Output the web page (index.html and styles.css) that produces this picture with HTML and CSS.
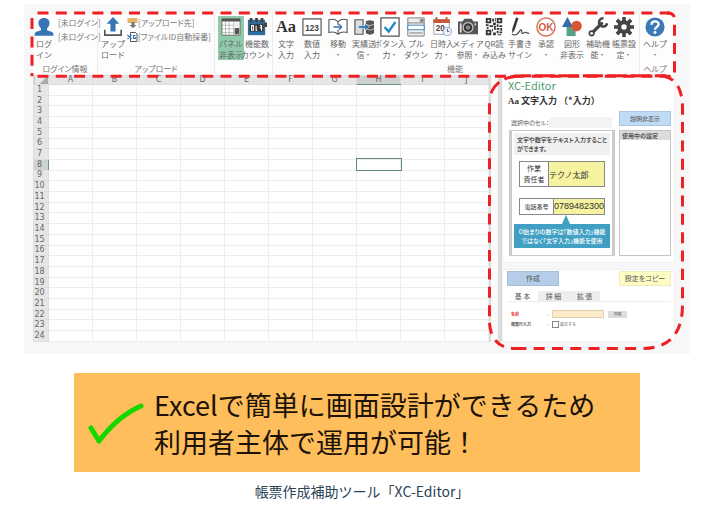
FILE: index.html
```html
<!DOCTYPE html>
<html lang="ja">
<head>
<meta charset="utf-8">
<title>XC-Editor</title>
<link rel="stylesheet" href="styles.css">
</head>
<body>
<figure class="feature">
<div class="shot">
  <div class="ribbon">
    <section class="group group-login">
      <div class="tools">
        <button class="tool"><svg class="icon" viewBox="0 0 22 22"><path fill="#3675b3" d="M11 1c4 0 6.500 2.500 6 6.500-.3 2.500-1.500 4-2.700 5.200v2L20 16.500q1.500.8 1.500 4H.5q0-3.200 1.500-4l5.700-1.800v-2C6.500 11.500 5.300 10 5 7.500 4.500 3.500 7 1 11 1z"/></svg><span>ログ<br>イン</span></button>
        <div class="notes"><span>[未ログイン]</span><span>[未ログイン]</span></div>
      </div>
      <h2 class="group-name">ログイン情報</h2>
    </section>
    <section class="group group-upload">
      <div class="tools">
        <button class="tool"><svg class="icon" viewBox="0 0 22 22"><path fill="#3675b3" d="M11 0l7 7.500h-4.200V16H8.200V7.500H4z"/><path fill="none" stroke="#555" stroke-width="1.800" d="M2 14v6h18v-6"/></svg><span>アップ<br>ロード</span></button>
        <div class="notes">
          <span><svg class="mini" viewBox="0 0 10 10"><path fill="#e8b765" d="M0 0h10v5H0z"/><path fill="#777" d="M4 4h3v3h2L5.500 10 2 7h2z"/></svg>[アップロード先]</span>
          <span><svg class="mini" viewBox="0 0 10 10"><path fill="#fff" stroke="#555" d="M3 .5h5L9.500 2v7.500H3z"/><path fill="none" stroke="#3675b3" stroke-width="1.200" d="M0 3l4 4M4 3L0 7M8 3.500H6v3h2V5"/></svg>[ファイルID自動採番]</span>
        </div>
      </div>
      <h2 class="group-name">アップロード</h2>
    </section>
    <section class="group group-panel">
      <div class="tools">
        <button class="tool tool-on"><svg class="icon" viewBox="0 0 22 22"><path fill="#fff" stroke="#666" d="M1 2h20v18H1z"/><path fill="#555" d="M1 2h20v3H1zM15 12h5v7h-5z"/><path stroke="#999" stroke-width=".7" fill="none" d="M1 9h13M1 13h13M1 17h13M5 5v15M9 5v15M14 5v15"/><path fill="#eee" d="M15 6h5v5h-5z"/></svg><span>パネル<br>非表示</span></button>
        <button class="tool"><svg class="icon" viewBox="0 0 22 22"><path fill="#2f6f9f" d="M1 3h19v17H1z"/><path fill="#444" d="M3 1h3v5H3zM9 1h3v5H9zM15 1h3v5h-3zM19 6h3v5h-3z"/><path fill="#333" d="M3 8h15v8H3z"/><path stroke="#fff" stroke-width="1.200" fill="none" d="M5 9.500h2v5H5zM10 9.500v5h1.500M14 9.500h2V12h-2M16 12v3"/></svg><span>機能数<br>カウント</span></button>
      </div>
    </section>
    <section class="group group-main">
      <div class="tools">
        <button class="tool"><svg class="icon" viewBox="0 0 22 22"><text class="aa" x="11" y="17" text-anchor="middle">Aa</text></svg><span>文字<br>入力</span></button>
        <button class="tool"><svg class="icon" viewBox="0 0 22 22"><path fill="#fff" stroke="#555" stroke-width="1.300" d="M1 2h20v18H1z"/><text class="digits" x="11" y="15" text-anchor="middle">123</text></svg><span>数値<br>入力</span></button>
        <button class="tool"><svg class="icon" viewBox="0 0 22 22"><path fill="#fff" stroke="#555" stroke-width="1.200" d="M11 5Q7 1.500 1 3v14q6-1.500 10 2 4-3.500 10-2V3q-6-1.500-10 2zM11 5v4M11 14v5"/><path fill="none" stroke="#3675b3" stroke-width="1.400" d="M6 11h9M12 8l3 3-3 3"/></svg><span>移動<br><i class="caret"></i></span></button>
        <button class="tool"><svg class="icon" viewBox="0 0 22 22"><path fill="#ddd" stroke="#555" stroke-width="1.300" d="M1 3h9v16H1z"/><path fill="#555" d="M13 5q4.500-3 9 0v13q-4.500 3-9 0z"/><path stroke="#ddd" stroke-width=".8" fill="none" d="M13 8q4.500 3 9 0M13 13q4.500 3 9 0"/><path fill="#3675b3" stroke="#fff" stroke-width=".5" d="M5 9.500h7V7l5 4-5 4v-2.500H5z"/></svg><span>実績送<br>信<i class="caret"></i></span></button>
        <button class="tool"><svg class="icon" viewBox="0 0 22 22"><path fill="#fff" stroke="#555" stroke-width="1.400" d="M1 1h20v20H1z"/><path fill="none" stroke="#268ac8" stroke-width="2.600" d="M5 11l4.500 5L17 5.500"/></svg><span>ボタン入<br>力<i class="caret"></i></span></button>
        <button class="tool"><svg class="icon" viewBox="0 0 22 22"><path fill="#eee" stroke="#777" d="M2 1h18v20H2z"/><path fill="#aaa" d="M15 2h5v4h-5z"/><path stroke="#777" d="M2 6.500h18M4 17.500h14"/><path fill="#fff" stroke="#3b7fb6" d="M2 9h18v5H2z"/><path fill="#555" d="M16 3l3 0-1.500 2z"/></svg><span>プル<br>ダウン</span></button>
        <button class="tool"><svg class="icon" viewBox="0 0 22 22"><path fill="#fff" stroke="#999" d="M2 3h17v16H2z"/><path fill="#c75836" d="M1.500 2.500h18v4h-18zM4 0h2v4H4zM15 0h2v4h-2z"/><text class="digits" x="9" y="15" text-anchor="middle">20</text><circle cx="17" cy="16" r="4.500" fill="#eef4fb" stroke="#86a7cd"/><path fill="none" stroke="#557" d="M17 13v3h2"/></svg><span>日時入<br>力<i class="caret"></i></span></button>
        <button class="tool"><svg class="icon" viewBox="0 0 22 22"><path fill="#555" d="M0 5h5l2-3h8l2 3h5v14H0z"/><circle cx="11" cy="11.500" r="6" fill="#ccc"/><circle cx="11" cy="11.500" r="4.700" fill="#333"/><circle cx="11" cy="11.500" r="2.500" fill="#888"/><path fill="#ddd" d="M2 7h2v10H2zM18 7h2v2h-2z"/></svg><span>メディア<br>参照<i class="caret"></i></span></button>
        <button class="tool"><svg class="icon" viewBox="0 0 22 22"><path fill="#333" d="M2 1h6v6H2zM14 1h6v6h-6zM2 14h6v6H2zM9 2h2v3H9zM12 1h1v4h-1zM10 6h3v3h-3zM2 8h3v2H2zM6 9h4v2H6zM3 11h2v2H3zM14 8h2v3h-2zM17 9h3v2h-3zM11 10h2v4h-2zM14 12h3v2h-3zM18 12h2v3h-2zM9 13h1v3H9zM10 17h3v3h-3zM14 15h2v3h-2zM17 16h3v2h-3zM15 19h4v1h-4z"/><path fill="#fff" d="M4 3h2v2H4zM16 3h2v2h-2zM4 16h2v2H4z"/></svg><span>QR読<br>み込み</span></button>
        <button class="tool"><svg class="icon" viewBox="0 0 22 22"><path stroke="#333" stroke-width="2.800" d="M8 1L4 13"/><path fill="#333" d="M2.500 12.500l3 1.200L2.500 18z"/><path fill="none" stroke="#444" stroke-width="1.300" d="M2 19c5 2 7-1 9-4 2-2 2 0 2 2s2 1 3 0 2 1 5 1"/></svg><span>手書き<br>サイン</span></button>
        <button class="tool"><svg class="icon" viewBox="0 0 22 22"><circle cx="11" cy="11" r="10" fill="#fff" stroke="#d9735a" stroke-width="1.600"/><text class="ok" x="11" y="15" text-anchor="middle">OK</text></svg><span>承認<br><i class="caret"></i></span></button>
        <button class="tool"><svg class="icon" viewBox="0 0 22 22"><path fill="#58a183" d="M5 10h10v11H5z"/><path fill="#3568ad" d="M6 0l6 11H0z"/><circle cx="16" cy="10" r="5.800" fill="#d95430"/></svg><span>図形<br>非表示</span></button>
        <button class="tool"><svg class="icon" viewBox="0 0 22 22"><path fill="none" stroke="#444" stroke-width="3.600" stroke-linecap="round" d="M4 18L15 7"/><path fill="none" stroke="#444" stroke-width="2.800" d="M17 1.500a4.500 4.500 0 1 0 4 5.500"/><circle cx="4" cy="18" r="3.400" fill="#444"/><circle cx="4" cy="18" r="1.500" fill="#fff"/></svg><span>補助機<br>能<i class="caret"></i></span></button>
        <button class="tool"><svg class="icon" viewBox="0 0 22 22"><path stroke="#444" stroke-width="4" d="M11 0v22M0 11h22M3.200 3.200l15.600 15.600M18.800 3.200L3.200 18.800"/><circle cx="11" cy="11" r="7.500" fill="#444"/><circle cx="11" cy="11" r="3" fill="#fff"/></svg><span>帳票設<br>定<i class="caret"></i></span></button>
      </div>
      <h2 class="group-name">機能</h2>
    </section>
    <section class="group group-help">
      <div class="tools">
        <button class="tool"><svg class="icon" viewBox="0 0 22 22"><circle cx="11" cy="11" r="10.500" fill="#3a78b8"/><path fill="none" stroke="#fff" stroke-width="2.600" d="M7.200 8.500C7.200 3.500 15 3.800 15 8c0 2.800-4 3-4 6"/><circle cx="11" cy="17" r="1.600" fill="#fff"/></svg><span>ヘルプ<br><i class="caret"></i></span></button>
      </div>
      <h2 class="group-name">ヘルプ</h2>
    </section>
  </div>

  <div class="workspace">
    <table class="sheet">
      <thead><tr id="letters"><th class="corner"></th></tr></thead>
      <tbody id="cells"></tbody>
    </table>
    <div class="gutter"></div>
    <aside class="panel">
      <section class="card">
        <h1 class="brand">XC-Editor</h1>
        <h2 class="mode"><b>Aa</b> 文字入力 （*入力）</h2>
        <div class="row">
          <label class="cell-label" for="cell">選択中のセル：</label>
          <input class="cell-input" id="cell" type="text">
          <button class="btn btn-blue">説明非表示</button>
        </div>
        <div class="boxes">
          <div class="help">
            <p class="help-text">文字や数字をテキスト入力すること<br>ができます。</p>
            <dl class="sample"><dt>作業<br>責任者</dt><dd>テクノ太郎</dd></dl>
            <dl class="sample sample-phone"><dt>電話番号</dt><dd>0789482300</dd></dl>
            <p class="callout">０始まりの数字は「数値入力」機能<br>ではなく「文字入力」機能を使用</p>
          </div>
          <div class="used"><h3>使用中の設定</h3></div>
        </div>
      </section>
      <section class="card card-form">
        <div class="row actions">
          <button class="btn btn-create">作成</button>
          <button class="btn btn-copy">設定をコピー</button>
        </div>
        <div class="tabs"><button class="tab tab-on">基 本</button><button class="tab">詳 細</button><button class="tab">拡 張</button></div>
        <div class="fields">
          <label class="required" for="name">名前</label><span>:</span>
          <div class="field"><input class="name" id="name" type="text"><button class="browse">参照</button></div>
          <span class="strong">複数行入力</span><span>:</span>
          <div class="field"><input class="check" id="multi" type="checkbox"><label for="multi">設定する</label></div>
        </div>
      </section>
    </aside>
  </div>

  <svg class="outline" viewBox="0 0 666 349" preserveAspectRatio="none">
    <path d="M13.500 9H646"/>
    <path d="M643 9Q650.500 9 650.500 15V72" stroke-dashoffset="2"/>
    <path d="M8 14V72"/>
    <path d="M13.500 72H651"/>
    <path d="M465.500 99V318"/>
    <path d="M467 89Q473 74 492 72" stroke-dasharray="14 6"/>
    <path d="M487 73Q490 71.500 500 71.500H642" stroke-dasharray="20 4"/>
    <path d="M640 72Q658.500 76 658.500 104V300Q658.500 343.500 618 343.500H490" stroke-dashoffset="1"/>
    <path d="M465.500 318Q467 343.500 492 343.500" />
  </svg>
</div>

<div class="banner">
  <svg class="tick" viewBox="0 0 56 42"><path d="M3 26l8 13Q30 14 53 4"/></svg>
  <p>Excelで簡単に画面設計ができるため<br>利用者主体で運用が可能！</p>
</div>
<figcaption>帳票作成補助ツール「XC-Editor」</figcaption>
</figure>
<script src="sheet.js"></script>
</body>
</html>
```

FILE: styles.css
```css
* { box-sizing: border-box; }
body, p, h1, h2, h3, dl, dd, figure { margin: 0; }
body {
  background: #fff;
  color: #555;
  font-family: "Noto Sans CJK JP", sans-serif;
}
button, input { font-family: inherit; color: inherit; margin: 0; padding: 0; border: 0; }
button { background: none; white-space: nowrap; }
.feature { padding: 4px 30px 0 24px; }

.shot {
  position: relative;
  background: #f7f7f7;
  padding: 10px 15px 12px 9px;
}
.outline {
  position: absolute;
  inset: 0;
  width: 100%;
  height: 100%;
  fill: none;
  stroke: #ee2024;
  stroke-width: 3;
  stroke-dasharray: 11 7.300;
  pointer-events: none;
}

/* Ribbon */
.ribbon { display: flex; height: 61px; padding-right: 5px; background: #fdfdfd; font-feature-settings: "palt"; }
.group {
  display: flex;
  flex-direction: column;
  justify-content: space-between;
  min-width: 0;
  padding-top: 2px;
  border-right: 1px solid #ececec;
}
.group-login { flex: 64 1 0; }
.group-upload { flex: 116 1 0; }
.group-panel { flex: 52 1 0; padding: 2px 2px 0 3px; }
.group-main { flex: 364 1 0; padding-right: 2px; }
.group-help { flex: 30 1 0; border-right: 0; }
.group-name {
  font-size: 8px;
  font-weight: 400;
  line-height: 12px;
  text-align: center;
  color: #777;
}
.tools { display: flex; }
.tool {
  display: flex;
  flex-direction: column;
  align-items: center;
  flex: 1 1 0;
  min-width: 0;
  font-size: 8px;
  line-height: 11px;
  color: #666;
}
.tool > span { min-height: 22px; }
.group-login .tool, .group-upload .tool { flex: 0 0 22px; }
.group-upload .tool { margin-left: 4px; }
.tool-on { background: #8fcbab; }
.icon { flex: none; width: 20px; height: 20px; margin: 1px; }
.caret {
  display: inline-block;
  width: 3px;
  height: 2px;
  margin: 0 2px 2px;
  background: #999;
  clip-path: polygon(0 0, 100% 0, 50% 100%);
}
.notes {
  display: flex;
  flex-direction: column;
  padding-left: 3px;
  font-size: 8px;
  line-height: 14px;
  white-space: nowrap;
  color: #777;
}
.notes span { display: flex; align-items: center; }
.mini { width: 11px; height: 10px; }
.aa { font: bold 18px "Liberation Serif", serif; fill: #333; }
.digits { font: bold 9px "Liberation Sans", sans-serif; fill: #444; }
.ok { font: bold 11px "Liberation Sans", sans-serif; fill: #d06048; }

/* Spreadsheet */
.workspace { display: grid; grid-template-columns: minmax(0, 456fr) minmax(0, 13fr) minmax(0, 173fr); }
.sheet {
  width: 100%;
  height: 267px;
  table-layout: fixed;
  border-collapse: collapse;
  background: #fff;
  font-family: "DejaVu Sans", sans-serif;
  font-size: 8px;
  line-height: 8px;
  color: #666;
}
.sheet th, .sheet td { padding: 0; border: 1px solid #ededed; }
.sheet th { background: #e6e6e6; border-color: #dedede; font-weight: 400; }
.sheet .corner {
  width: 15px;
  background: linear-gradient(135deg, #e6e6e6 55%, #aaa 55%);
}
.sheet tbody th { padding-right: 3px; }
.sheet th.active { background: #cdd3d0; }
.sheet thead th.active { border-bottom: 1px solid #73917f; }
.sheet tbody th.active { border-right: 1px solid #73917f; }
.sheet td.active { outline: 1px solid #5c8a74; }
.gutter { background: #fafafa; border: solid #dcdcdc; border-width: 0 4px 0 2px; }

/* Editor panel */
.panel { display: flex; flex-direction: column; gap: 6px; padding-top: 2px; font-size: 6px; line-height: 9px; }
.card { background: #fff; border: 1px solid #f1f1f1; padding: 0 3px 6px 5px; }
.brand { font-size: 11px; font-weight: 400; line-height: 15px; color: #4f9b70; }
.mode { font-size: 9px; line-height: 16px; color: #333; }
.mode b { font-family: "Liberation Serif", serif; }
.row { display: flex; align-items: flex-end; }
.cell-label { width: 41px; padding: 0 0 1px 3px; white-space: nowrap; font-feature-settings: "palt"; }
.cell-input { flex: 1 1 0; min-width: 0; height: 11px; background: #f3f3f3; }
.btn { width: 52px; height: 15px; font-size: 7px; line-height: 9px; }
.btn-blue { margin-left: 7px; background: #c0dcf4; border: 1px solid #a9c9e6; }
.row .btn-blue { margin: 2px 0 2px 7px; font-size: 6px; }
.boxes { display: flex; gap: 4px; padding: 2px 0 0 1px; }
.help { flex: 1 1 0; min-width: 0; height: 126px; border: 1px solid #ccc; border-width: 1px 3px; padding: 2px; }
.help-text {
  margin-bottom: 6px;
  padding: 2px 3px;
  background: #f0f0f0;
  font-weight: 700;
  white-space: nowrap;
  font-feature-settings: "palt";
}
.sample { display: flex; height: 26px; margin: 0 5px 11px; border: 1px solid #888; }
.sample dt { display: grid; place-items: center; flex: 0 0 29px; border-right: 1px solid #888; font-size: 7px; line-height: 11px; text-align: center; color: #333; }
.sample dd { display: flex; align-items: center; flex: 1; min-width: 0; background: #f5f2a0; font-size: 8px; color: #333; white-space: nowrap; }
.sample-phone { height: 17px; margin-bottom: 9px; }
.sample-phone dt { flex-basis: 34px; font-size: 6px; }
.sample-phone dd { font-family: "Liberation Sans", sans-serif; font-size: 9px; }
.callout {
  position: relative;
  padding: 3px 0;
  background: #419fc3;
  color: #fff;
  font-weight: 500;
  text-align: center;
  white-space: nowrap;
  font-feature-settings: "palt";
}
.callout::before {
  content: "";
  position: absolute;
  left: 50%;
  bottom: 100%;
  border: 4px solid transparent;
  border-top: 0;
  border-bottom: 9px solid #419fc3;
}
.used { width: 52px; border: 1px solid #c4c4c4; }
.used h3 { padding-left: 2px; background: #dcdcdc; font-size: 6px; line-height: 9px; font-feature-settings: "palt"; }

.card-form { flex: 1; padding: 1px 3px 0 4px; }
.actions { justify-content: space-between; }
.btn-create { background: #b5cde9; border: 1px solid #a7bfdb; }
.btn-copy { background: #fffdc3; border: 1px solid #efecc0; font-feature-settings: "palt"; }
.tabs { display: flex; padding-top: 5px; }
.tab { width: 31px; height: 10px; background: #eee; font-size: 7px; line-height: 9px; }
.tab-on { background: #fff; }
.fields {
  display: grid;
  grid-template-columns: 37px 4px 1fr;
  row-gap: 2px;
  padding: 8px 4px 0;
  border-top: 1px solid #eee;
  font-size: 4px;
  line-height: 8px;
}
.field { display: flex; align-items: center; gap: 1px; }
.required { color: #e33; font-weight: 700; }
.strong { font-weight: 700; }
.name { width: 52px; height: 8px; background: #fcebc8; border: 1px solid #e0cfa8; }
.browse { width: 19px; height: 7px; margin-left: 3px; background: #ddd; font-size: 4px; line-height: 7px; }
.check { appearance: none; width: 7px; height: 7px; border: 1px solid #888; background: #fff; }

/* Message */
.banner {
  display: flex;
  align-items: center;
  gap: 10px;
  margin: 19px 50px 0;
  padding: 13px 14px 12px;
  background: #ffbe5c;
  color: #1c1208;
  font-size: 27px;
  line-height: 37px;
}
.banner p { white-space: nowrap; }
.tick { width: 56px; height: 42px; fill: none; stroke: #14d800; stroke-width: 5; stroke-linecap: round; stroke-linejoin: round; }
figcaption { padding: 8px 0 0 10px; font-size: 14px; line-height: 22px; text-align: center; color: #2c4456; }
```

FILE: sheet.js
```js
const letters = document.getElementById("letters");
const cells = document.getElementById("cells");
const names = "ABCDEFGHIJ".split("");

names.forEach((name) => {
  const th = document.createElement("th");
  th.textContent = name;
  if (name === "H") th.className = "active";
  letters.append(th);
});

for (let row = 1; row <= 24; row++) {
  const tr = document.createElement("tr");
  const th = document.createElement("th");
  th.textContent = row;
  if (row === 8) th.className = "active";
  tr.append(th);
  names.forEach((name) => {
    const td = document.createElement("td");
    if (row === 8 && name === "H") td.className = "active";
    tr.append(td);
  });
  cells.append(tr);
}
```
